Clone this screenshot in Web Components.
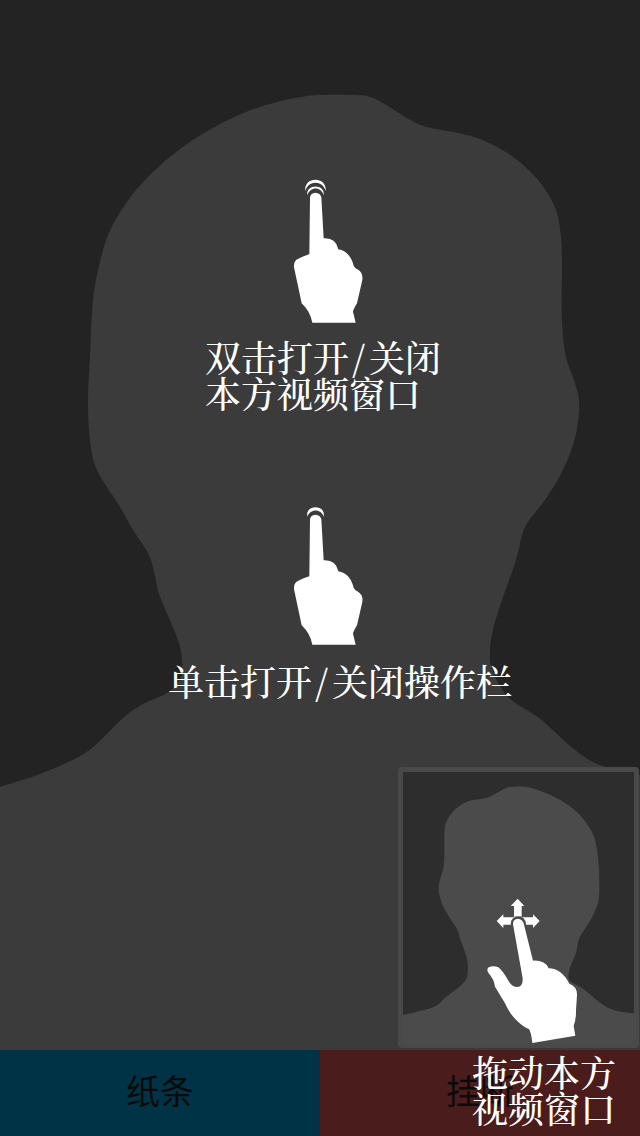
<!DOCTYPE html>
<html lang="zh-CN">
<head>
<meta charset="utf-8">
<meta name="viewport" content="width=device-width, initial-scale=1">
<title>视频通话</title>
<style>
  body { margin: 0; background: #232323; }
</style>
</head>
<body>
<video-call></video-call>
<script>
// Smooth open curve through a list of points, as SVG cubic segments.
function curve(points) {
  const p = i => points[Math.max(0, Math.min(points.length - 1, i))];
  let d = `M${p(0)}`;
  for (let i = 0; i < points.length - 1; i++) {
    const [a, b, c, e] = [p(i - 1), p(i), p(i + 1), p(i + 2)];
    d += `C${b[0] + (c[0] - a[0]) / 6} ${b[1] + (c[1] - a[1]) / 6} ${c[0] - (e[0] - b[0]) / 6} ${c[1] - (e[1] - b[1]) / 6} ${c[0]} ${c[1]}`;
  }
  return d;
}

const REMOTE = [[0,787],[45,772],[88,751],[122,719],[143,704],[169,692],[181,677],[182,661],[179,643],[169,618],[159,594],[155,576],[149,555],[133,530],[120,507],[97,470],[90,440],[88,400],[90,357],[92,313],[96,280],[108,235],[129,199],[153,172],[180,149],[211,129],[246,112],[277,102],[301,97],[318,95],[356,95],[373,98],[391,108],[414,122],[431,128],[459,133],[477,138],[499,148],[521,163],[542,185],[556,210],[561,237],[562,260],[562,320],[566,357],[574,380],[579,400],[578,422],[573,445],[562,472],[545,500],[525,527],[516,560],[500,606],[493,630],[490,650],[492,669],[508,697],[539,718],[575,750],[600,765],[640,775]];
const LOCAL = [[40,765],[80,756],[135,740],[170,710],[215,675],[232,650],[234,610],[225,575],[212,540],[203,510],[185,482],[163,445],[150,410],[147,380],[152,355],[161,325],[164,280],[164,215],[170,185],[190,155],[215,135],[245,122],[290,115],[325,98],[350,84],[375,81],[410,82],[460,97],[510,120],[560,156],[595,198],[615,240],[625,300],[628,360],[626,420],[610,465],[590,500],[568,535],[558,580],[543,615],[536,645],[542,665],[580,687],[640,735],[680,752],[732,760]];

const HAND = 'M97 458Q91 425 65 400L42 292Q40 272 55 266Q70 258 88 253L90 82Q92 69 106 68Q121 69 124 82L131 205Q168 203 175 238Q210 244 221 287Q225 295 232 298Q250 308 247 330L231 400Q220 418 219 425L227 458Z';

class PersonSilhouette extends HTMLElement {
  connectedCallback() {
    const local = this.getAttribute('kind') === 'local';
    const d = local ? curve(LOCAL) + 'V849H40Z' : curve(REMOTE) + 'V1050H0Z';
    this.attachShadow({ mode: 'open' }).innerHTML = `
      <style>
        :host { display: block; overflow: hidden; background: var(--back); }
        svg { display: block; width: 100%; height: 100%; }
        path { fill: var(--figure); }
      </style>
      <svg viewBox="${local ? '40 37 692 812' : '0 0 640 1050'}" preserveAspectRatio="none" aria-hidden="true"><path d="${d}"/></svg>`;
  }
}

class GestureIcon extends HTMLElement {
  connectedCallback() {
    const kind = this.getAttribute('kind');
    const [box, shapes] = {
      double: ['-30 0 300 480', `<path d="M76 64C70 18 142 18 137 64C129 30 84 30 76 64Z"/><path d="M82 76C76 41 137 41 131 76C124 49 90 49 82 76Z"/><path d="${HAND}"/>`],
      single: ['-30 24 300 462', `<path d="M82 74C74 36 139 36 131 74C124 49 90 49 82 74Z"/><path d="${HAND}"/>`],
      drag: ['0 0 390 480', `<path d="M143 26L163 48H155V80H132V48H122Z"/><path d="M80 93L100 73V82H189V73L209 93L189 114V104H100V114Z"/><circle cx="145" cy="102" r="23"/><path d="M187 459L316 437L311 408Q319 385 318 360L321 315Q322 290 298 281Q275 236 236 235Q225 210 189 212L161 100Q156 87 144 86Q128 88 129 103L158 265Q159 290 142 291Q127 291 117 275Q97 240 85 232Q70 225 56 232Q48 238 56 250Q72 268 75 290L105 340Q130 395 177 418Q183 425 187 459Z"/>`]
    }[kind];
    this.attachShadow({ mode: 'open' }).innerHTML = `
      <style>
        :host { display: block; }
        svg { display: block; width: 100px; height: 160px; fill: #fff; }
        svg.single { height: 154px; }
        svg.drag { width: 130px; }
        circle { fill: #4b4b4b; }
      </style>
      <svg class="${kind}" viewBox="${box}" aria-hidden="true">${shapes}</svg>`;
  }
}

class GestureTip extends HTMLElement {
  connectedCallback() {
    this.attachShadow({ mode: 'open' }).innerHTML = `
      <style>
        :host { display: flex; flex-direction: column; align-items: center; color: #fff;
          font: 500 36px/36px "Noto Serif CJK SC", "Noto Sans CJK SC", serif; }
        p { margin: 0; white-space: nowrap; }
      </style>
      <gesture-icon kind="${this.getAttribute('gesture')}"></gesture-icon>
      <p><slot></slot></p>`;
  }
}

class CallActions extends HTMLElement {
  connectedCallback() {
    this.attachShadow({ mode: 'open' }).innerHTML = `
      <style>
        :host { display: grid; grid-template-columns: 1fr 1fr; }
        button { height: 86px; margin: 0; padding: 0 0 6px; border: 0; color: #0a0a0a;
          font: 400 34px/36px "Noto Sans CJK SC", sans-serif; }
        .note { background: #003345; }
        .end { background: #4b1c1c; }
      </style>
      <button class="note" type="button">纸条</button>
      <button class="end" type="button">挂断</button>`;
  }
}

class VideoCall extends HTMLElement {
  connectedCallback() {
    this.attachShadow({ mode: 'open' }).innerHTML = `
      <style>
        :host { display: flex; flex-direction: column; min-height: 100vh; position: relative; overflow: hidden; }
        main { flex: 1; display: grid; }
        main > * { grid-area: 1 / 1; }
        .remote { --back: #232323; --figure: #3b3b3b; }
        .guide { position: relative; display: flex; flex-direction: column; align-items: center; gap: 89px; padding: 170px 0 0; }
        gesture-tip { gap: 9px; }
        .text { display: block; }
        .first { padding-left: 6px; }
        .second { padding-left: 40px; }
        .slash { padding: 0 4px 0 3px; }
        .local { position: absolute; right: 1px; bottom: 88px; width: 231px; height: 271px;
          border: 5px solid #494949; border-radius: 4px; --back: #2d2d2d; --figure: #4b4b4b; }
        .drag-icon { position: absolute; right: 40px; bottom: 86px; }
        .drag-text { position: absolute; right: 24px; bottom: 10px; margin: 0; color: #fff; pointer-events: none;
          font: 500 36px/36px "Noto Serif CJK SC", "Noto Sans CJK SC", serif; }
      </style>
      <main>
        <person-silhouette class="remote"></person-silhouette>
        <div class="guide">
          <gesture-tip gesture="double"><span class="text first">双击打开<span class="slash">/</span>关闭<br>本方视频窗口</span></gesture-tip>
          <gesture-tip gesture="single"><span class="text second">单击打开<span class="slash">/</span>关闭操作栏</span></gesture-tip>
        </div>
      </main>
      <call-actions></call-actions>
      <person-silhouette class="local" kind="local"></person-silhouette>
      <gesture-icon class="drag-icon" kind="drag"></gesture-icon>
      <p class="drag-text">拖动本方<br>视频窗口</p>`;
  }
}

customElements.define('person-silhouette', PersonSilhouette);
customElements.define('gesture-icon', GestureIcon);
customElements.define('gesture-tip', GestureTip);
customElements.define('call-actions', CallActions);
customElements.define('video-call', VideoCall);
</script>
</body>
</html>
